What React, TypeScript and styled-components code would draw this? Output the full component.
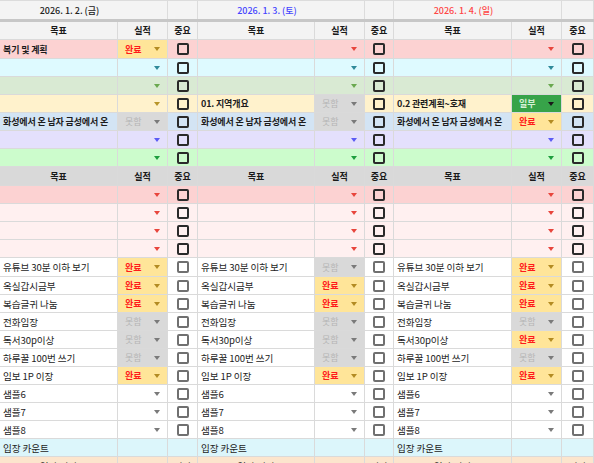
import React from 'react';
import styled, { createGlobalStyle } from 'styled-components';

const GlobalStyle = createGlobalStyle`
  html, body { margin: 0; padding: 0; background: #ffffff; }
  body { font-family: "Noto Sans CJK KR", "Noto Sans", sans-serif; }
  * { box-sizing: border-box; }
`;

type Status = 'done' | 'fail' | 'part' | null;

type Tone = { bg: string; arrow: string; box: string };

const TONES: Record<string, Tone> = {
  pink: { bg: '#fcd2d2', arrow: '#e8453c', box: '#2a2a2a' },
  cyan: { bg: '#defaff', arrow: '#2f8a9a', box: '#2a2a2a' },
  green: { bg: '#d9ead3', arrow: '#6aa84f', box: '#2a2a2a' },
  yellow: { bg: '#fff2cc', arrow: '#b8952a', box: '#2a2a2a' },
  blue: { bg: '#d3e4f4', arrow: '#6f8fae', box: '#2a2a2a' },
  lavender: { bg: '#e4e0fc', arrow: '#5b5bf5', box: '#2a2a2a' },
  lime: { bg: '#ccfccc', arrow: '#1e9e3e', box: '#2a2a2a' },
  pinkSoft: { bg: '#fff0f0', arrow: '#e8453c', box: '#2a2a2a' },
  white: { bg: '#ffffff', arrow: '#7a7a7a', box: '#707070' },
};

const STATUS = {
  done: { label: '완료', bg: '#ffe599', color: '#ff1a1a', arrow: '#b38b22', weight: 700 },
  fail: { label: '못함', bg: '#d9d9d9', color: '#b5b5b5', arrow: '#7a7a7a', weight: 400 },
  part: { label: '일부', bg: '#37a349', color: '#d6f0d6', arrow: '#1a1a1a', weight: 700 },
};

const COLS = '118px 50px 30px 117px 50px 29px 118px 50px 32px';

const Sheet = styled.div`
  width: 594px;
  height: 463px;
  overflow: hidden;
  background: #fff;
  font-size: 9.6px;
  color: #1f1f1f;
`;

const DateRow = styled.div`
  display: grid;
  grid-template-columns: 168px 30px 167px 29px 168px 32px;
  height: 22px;
  background: #f4f4f4;
  border-top: 1px solid #dcdcdc;
  border-bottom: 3px solid #c7c7c7;
`;

const DateCell = styled.div<{ $color?: string }>`
  display: flex;
  align-items: center;
  justify-content: center;
  padding-right: 28px;
  border-right: 1px solid #dcdcdc;
  color: ${(p) => p.$color || '#222'};
  font-size: 9px;
  font-weight: 500;
  white-space: nowrap;
`;

const SheetRow = styled.div<{ $h: number }>`
  display: grid;
  grid-template-columns: ${COLS};
  height: ${(p) => p.$h}px;
`;

const Cell = styled.div<{ $bg?: string }>`
  display: flex;
  align-items: center;
  overflow: hidden;
  white-space: nowrap;
  border-right: 1px solid #dadada;
  border-bottom: 1px solid #dadada;
  background: ${(p) => p.$bg || '#fff'};
`;

const HeadCell = styled(Cell)`
  justify-content: center;
  font-size: 9px;
  font-weight: 700;
  color: #1a1a1a;
`;

const GoalCell = styled(Cell)<{ $bold?: boolean }>`
  padding-left: 3px;
  font-size: ${(p) => (p.$bold ? '9px' : '9.6px')};
  letter-spacing: ${(p) => (p.$bold ? '-0.15px' : '-0.1px')};
  font-weight: ${(p) => (p.$bold ? 700 : 400)};
  color: #1c1c1c;
`;

const CenterCell = styled(Cell)`
  justify-content: center;
`;

const StatusCell = styled(Cell)`
  justify-content: space-between;
  padding: 0 7px 0 7px;
`;

const StatusText = styled.span<{ $color: string; $weight: number }>`
  color: ${(p) => p.$color};
  font-size: 9px;
  font-weight: ${(p) => p.$weight};
`;

const Arrow = styled.span<{ $color: string }>`
  margin-left: auto;
  width: 0;
  height: 0;
  border-left: 3.5px solid transparent;
  border-right: 3.5px solid transparent;
  border-top: 4px solid ${(p) => p.$color};
`;

const CheckCell = styled(Cell)`
  justify-content: center;
`;

const Box = styled.span<{ $color: string }>`
  width: 12px;
  height: 12px;
  border: 2px solid ${(p) => p.$color};
  border-radius: 2px;
`;

type Entry = [string, Status];
type RowDef = { tone: string; h: number; bold?: boolean; entries: Entry[] };

const TOP: RowDef[] = [
  { tone: 'pink', h: 19, bold: true, entries: [['복기 및 계획', 'done'], ['', null], ['', null]] },
  { tone: 'cyan', h: 18, bold: true, entries: [['', null], ['', null], ['', null]] },
  { tone: 'green', h: 18, bold: true, entries: [['', null], ['', null], ['', null]] },
  { tone: 'yellow', h: 18, bold: true, entries: [['', null], ['01. 지역개요', 'fail'], ['0.2 관련계획~호재', 'part']] },
  {
    tone: 'blue', h: 18, bold: true,
    entries: [['화성에서 온 남자 금성에서 온', 'fail'], ['화성에서 온 남자 금성에서 온', 'fail'], ['화성에서 온 남자 금성에서 온', 'done']],
  },
  { tone: 'lavender', h: 18, bold: true, entries: [['', null], ['', null], ['', null]] },
  { tone: 'lime', h: 18, bold: true, entries: [['', null], ['', null], ['', null]] },
];

const PINK: RowDef[] = [
  { tone: 'pink', h: 18, entries: [['', null], ['', null], ['', null]] },
  { tone: 'pinkSoft', h: 18, entries: [['', null], ['', null], ['', null]] },
  { tone: 'pinkSoft', h: 18, entries: [['', null], ['', null], ['', null]] },
  { tone: 'pinkSoft', h: 18, entries: [['', null], ['', null], ['', null]] },
];

const HABITS: [string, Status[], number][] = [
  ['유튜브 30분 이하 보기', ['done', 'fail', 'done'], 19],
  ['옥실갑시금부', ['done', 'done', 'done'], 18],
  ['복습글귀 나눔', ['done', 'done', 'done'], 18],
  ['전화임장', ['fail', 'fail', 'fail'], 18],
  ['독서30p이상', ['fail', 'fail', 'done'], 18],
  ['하루꿀 100번 쓰기', ['fail', 'fail', 'fail'], 18],
  ['임보 1P 이장', ['done', 'done', 'done'], 18],
  ['샘플6', [null, null, null], 18],
  ['샘플7', [null, null, null], 18],
  ['샘플8', [null, null, null], 18],
];

const Status: React.FC<{ status: Status; tone: Tone }> = ({ status, tone }) => {
  if (!status) {
    return (
      <StatusCell $bg={tone.bg}>
        <Arrow $color={tone.arrow} />
      </StatusCell>
    );
  }
  const s = STATUS[status];
  return (
    <StatusCell $bg={s.bg}>
      <StatusText $color={s.color} $weight={s.weight}>{s.label}</StatusText>
      <Arrow $color={s.arrow} />
    </StatusCell>
  );
};

const Row: React.FC<{ def: RowDef }> = ({ def }) => {
  const tone = TONES[def.tone];
  return (
    <SheetRow $h={def.h}>
      {def.entries.map(([goal, st], i) => (
        <React.Fragment key={i}>
          <GoalCell $bg={tone.bg} $bold={def.bold}>{goal}</GoalCell>
          <Status status={st} tone={tone} />
          <CheckCell $bg={tone.bg}>
            <Box $color={tone.box} />
          </CheckCell>
        </React.Fragment>
      ))}
    </SheetRow>
  );
};

const HeaderRow: React.FC<{ h: number; bg: string }> = ({ h, bg }) => (
  <SheetRow $h={h}>
    {[0, 1, 2].map((i) => (
      <React.Fragment key={i}>
        <HeadCell $bg={bg}>목표</HeadCell>
        <HeadCell $bg={bg}>실적</HeadCell>
        <HeadCell $bg={bg}>중요</HeadCell>
      </React.Fragment>
    ))}
  </SheetRow>
);

export default function App() {
  return (
    <>
      <GlobalStyle />
      <Sheet>
        <DateRow>
          <DateCell>2026. 1. 2. (금)</DateCell>
          <DateCell />
          <DateCell $color="#4545ff">2026. 1. 3. (토)</DateCell>
          <DateCell />
          <DateCell $color="#ff4545">2026. 1. 4. (일)</DateCell>
          <DateCell />
        </DateRow>
        <HeaderRow h={18} bg="#f3f3f3" />
        {TOP.map((r, i) => (
          <Row key={`t${i}`} def={r} />
        ))}
        <HeaderRow h={19} bg="#d9d9d9" />
        {PINK.map((r, i) => (
          <Row key={`p${i}`} def={r} />
        ))}
        {HABITS.map(([goal, sts, h], i) => (
          <Row
            key={`h${i}`}
            def={{ tone: 'white', h, entries: sts.map((s) => [goal, s] as Entry) }}
          />
        ))}
        <SheetRow $h={18}>
          {[0, 1, 2].map((i) => (
            <React.Fragment key={i}>
              <GoalCell $bg="#dcf6fb">입장 카운트</GoalCell>
              <Cell $bg="#dcf6fb" />
              <Cell $bg="#dcf6fb" />
            </React.Fragment>
          ))}
        </SheetRow>
        <SheetRow $h={18}>
          {[0, 1, 2].map((i) => (
            <React.Fragment key={i}>
              <CenterCell $bg="#fce5cd">임장 시간</CenterCell>
              <Cell $bg="#fce5cd" />
              <CenterCell $bg="#fce5cd">시간</CenterCell>
            </React.Fragment>
          ))}
        </SheetRow>
      </Sheet>
    </>
  );
}
